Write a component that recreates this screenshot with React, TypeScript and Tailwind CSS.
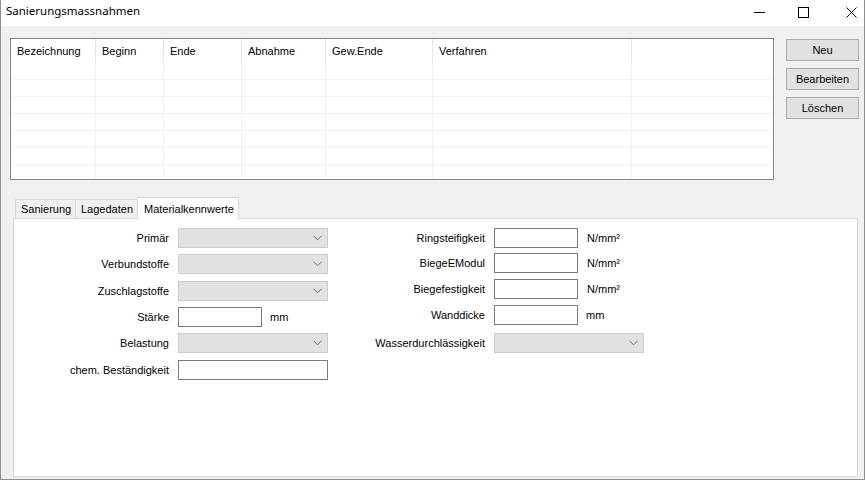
import React from "react";

const font = { fontFamily: '"Liberation Sans", Arial, sans-serif' };

function Chevron() {
  return (
    <svg width="9" height="6" viewBox="0 0 9 6" className="shrink-0">
      <path d="M0.5 0.8 L4.5 4.8 L8.5 0.8" fill="none" stroke="#6e6e6e" strokeWidth="1" />
    </svg>
  );
}

function Combo({ w = 150 }: { w?: number }) {
  return (
    <div
      className="h-[20px] bg-[#e1e1e1] border border-[#cccccc] flex items-center justify-end pr-[5px] box-border"
      style={{ width: w }}
    >
      <Chevron />
    </div>
  );
}

function TextBox({ w = 84 }: { w?: number }) {
  return <div className="h-[20px] bg-white border border-[#7a7a7a] box-border" style={{ width: w }} />;
}

const cols = ["Bezeichnung", "Beginn", "Ende", "Abnahme", "Gew.Ende", "Verfahren", ""];

function ListView() {
  const rows = Array.from({ length: 7 });
  return (
    <div className="w-[764px] h-[142px] border border-[#828790] bg-white box-border overflow-hidden">
      <div className="grid grid-cols-[85px_68px_78px_84px_107px_199px_1fr]">
        {cols.map((c, i) => (
          <div
            key={i}
            className={`h-[24px] pl-[6px] pt-[6px] text-[11px] text-black leading-[13px] ${i < 6 ? "border-r border-[#e5e5e5]" : ""}`}
          >
            {c}
          </div>
        ))}
        {rows.map((_, r) =>
          cols.map((_, i) => (
            <div
              key={`${r}-${i}`}
              className={`h-[17px] border-b border-[#f0f0f0] ${i < 6 ? "border-r border-r-[#f0f0f0]" : ""}`}
            />
          ))
        )}
      </div>
    </div>
  );
}

function Btn({ label }: { label: string }) {
  return (
    <div className="w-[73px] h-[22px] bg-[#e1e1e1] border border-[#adadad] box-border flex items-center justify-center text-[11px] text-black">
      {label}
    </div>
  );
}

function Label({ text, w }: { text: string; w: number }) {
  return (
    <div className="text-right text-[11px] text-black shrink-0 pr-[9px] box-border" style={{ width: w }}>
      {text}
    </div>
  );
}

export default function App() {
  return (
    <div
      className="w-[865px] h-[480px] bg-[#f0f0f0] border-x border-b border-[#8f8f8f] box-border flex flex-col overflow-hidden"
      style={font}
    >
      {/* Title bar */}
      <div className="h-[26px] bg-white flex items-center shrink-0">
        <div
          className="pl-[5px] pb-[4px] text-[11.5px] text-black"
          style={{ fontFamily: '"Noto Sans", "Open Sans", sans-serif' }}
        >
          Sanierungsmassnahmen
        </div>
        <div className="ml-auto flex items-center pr-[7px] pb-[2px] h-full">
          <svg width="11" height="11" viewBox="0 0 11 11">
            <line x1="0" y1="5.5" x2="11" y2="5.5" stroke="#000" strokeWidth="1" />
          </svg>
          <svg width="11" height="11" viewBox="0 0 11 11" className="ml-[33px]">
            <rect x="0.5" y="0.5" width="10" height="10" fill="none" stroke="#000" strokeWidth="1" />
          </svg>
          <svg width="11" height="11" viewBox="0 0 11 11" className="ml-[37px]">
            <line x1="0.5" y1="0.5" x2="10.5" y2="10.5" stroke="#000" strokeWidth="1" />
            <line x1="10.5" y1="0.5" x2="0.5" y2="10.5" stroke="#000" strokeWidth="1" />
          </svg>
        </div>
      </div>

      {/* Top: list + buttons */}
      <div className="flex pl-[9px] pt-[12px]">
        <ListView />
        <div className="ml-[12px] mt-[1px] flex flex-col gap-[7px]">
          <Btn label="Neu" />
          <Btn label="Bearbeiten" />
          <Btn label="Löschen" />
        </div>
      </div>

      {/* Tabs */}
      <div className="pl-[12px] mt-[17px] flex flex-col">
        <div className="flex items-end h-[21px] pl-[2px]">
          <div className="h-[19px] px-[5px] border border-b-0 border-[#d9d9d9] bg-[#f0f0f0] text-[11px] flex items-center box-border w-[61px]">
            Sanierung
          </div>
          <div className="h-[19px] px-[5px] border border-b-0 border-l-0 border-[#d9d9d9] bg-[#f0f0f0] text-[11px] flex items-center box-border w-[62px]">
            Lagedaten
          </div>
          <div className="h-[22px] px-[6px] border border-b-0 border-[#d9d9d9] bg-white text-[11px] flex items-start pt-[3px] box-border w-[102px] -ml-[1px] relative top-[1px] z-10">
            Materialkennwerte
          </div>
        </div>
        <div className="w-[845px] h-[259px] bg-white border border-[#d9d9d9] box-border flex pt-[9px]">
          {/* Left column */}
          <div className="flex flex-col">
            <div className="flex items-center h-[20px]">
              <Label text="Primär" w={164} />
              <Combo />
            </div>
            <div className="flex items-center h-[20px] mt-[6px]">
              <Label text="Verbundstoffe" w={164} />
              <Combo />
            </div>
            <div className="flex items-center h-[20px] mt-[7px]">
              <Label text="Zuschlagstoffe" w={164} />
              <Combo />
            </div>
            <div className="flex items-center h-[20px] mt-[6px]">
              <Label text="Stärke" w={164} />
              <TextBox w={84} />
              <div className="text-[11px] ml-[8px]">mm</div>
            </div>
            <div className="flex items-center h-[20px] mt-[6px]">
              <Label text="Belastung" w={164} />
              <Combo />
            </div>
            <div className="flex items-center h-[20px] mt-[7px]">
              <Label text="chem. Beständigkeit" w={164} />
              <TextBox w={150} />
            </div>
          </div>
          {/* Right column */}
          <div className="flex flex-col ml-[10px]">
            <div className="flex items-center h-[20px]">
              <Label text="Ringsteifigkeit" w={156} />
              <TextBox w={84} />
              <div className="text-[11px] ml-[9px]">N/mm²</div>
            </div>
            <div className="flex items-center h-[20px] mt-[5px]">
              <Label text="BiegeEModul" w={156} />
              <TextBox w={84} />
              <div className="text-[11px] ml-[9px]">N/mm²</div>
            </div>
            <div className="flex items-center h-[20px] mt-[6px]">
              <Label text="Biegefestigkeit" w={156} />
              <TextBox w={84} />
              <div className="text-[11px] ml-[9px]">N/mm²</div>
            </div>
            <div className="flex items-center h-[20px] mt-[6px]">
              <Label text="Wanddicke" w={156} />
              <TextBox w={84} />
              <div className="text-[11px] ml-[8px]">mm</div>
            </div>
            <div className="flex items-center h-[20px] mt-[8px]">
              <Label text="Wasserdurchlässigkeit" w={156} />
              <Combo />
            </div>
          </div>
        </div>
      </div>
    </div>
  );
}
